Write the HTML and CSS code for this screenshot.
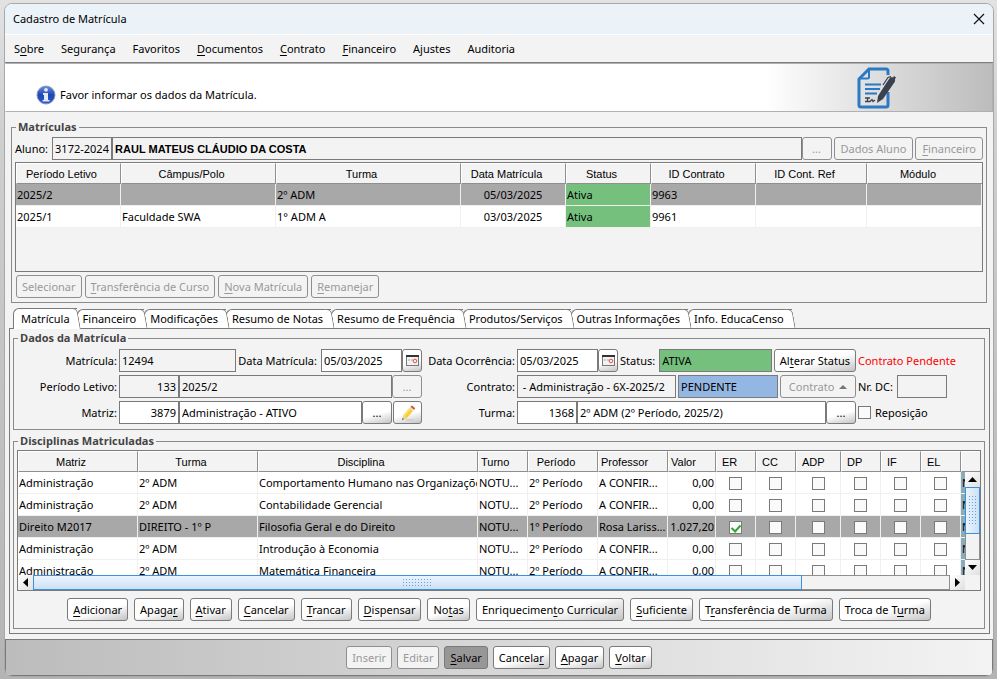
FILE: index.html
```
<!DOCTYPE html>
<html lang="pt-BR">

<head>
    <meta charset="UTF-8">
    <meta name="viewport" content="width=device-width, initial-scale=1.0">
    <title>Cadastro de Matrícula</title>
    <link rel="stylesheet" href="styles.css">
</head>

<body>
    <div class="window">
        <header class="titlebar">
            <h1>Cadastro de Matrícula</h1>
            <button class="close" aria-label="Fechar">
                <svg width="12" height="12" viewBox="0 0 12 12"><path d="M1 1l10 10M11 1L1 11" stroke="#111" stroke-width="1.2" fill="none"/></svg>
            </button>
        </header>

        <nav class="menubar">
            <a href="#">S<u>o</u>bre</a>
            <a href="#">Segurança</a>
            <a href="#">Favoritos</a>
            <a href="#"><u>D</u>ocumentos</a>
            <a href="#"><u>C</u>ontrato</a>
            <a href="#"><u>F</u>inanceiro</a>
            <a href="#">Ajustes</a>
            <a href="#">Auditoria</a>
        </nav>

        <div class="banner">
            <p class="message">
                <svg width="20" height="20" viewBox="0 0 20 20">
                    <defs>
                        <linearGradient id="info" x1="0" y1="0" x2="0" y2="1">
                            <stop offset="0" stop-color="#6a8fe0"/>
                            <stop offset="0.5" stop-color="#1c46b4"/>
                            <stop offset="1" stop-color="#2a5cd8"/>
                        </linearGradient>
                    </defs>
                    <circle cx="10" cy="10" r="9" fill="url(#info)" stroke="#8a97b8"/>
                    <circle cx="10" cy="4.800" r="1.900" fill="#e4e8f4"/>
                    <path d="M7 8h5v7h1.500v1.500h-7v-1.500H8v-5H7z" fill="#e4e8f4"/>
                </svg>
                Favor informar os dados da Matrícula.
            </p>
            <svg class="doc-icon" width="40" height="42" viewBox="0 0 40 42">
                <path d="M31 8V4a2 2 0 0 0-2-2H12L2 12v26a2 2 0 0 0 2 2h25a2 2 0 0 0 2-2V25" fill="none" stroke="#2b78c5" stroke-width="3"/>
                <path d="M12 2v8a1.500 1.500 0 0 1-1.500 1.500H2" fill="none" stroke="#2b78c5" stroke-width="2"/>
                <path d="M8 17.500h16M8 22h15M8 26.500h12" stroke="#2b78c5" stroke-width="2"/>
                <path d="M8 31h5M10.500 31v3.500M8 34.500h5l2-2 1 2 2-1.500" fill="none" stroke="#3a4250" stroke-width="1.3"/>
                <path d="M20 36l1-7 9-14 3.500-5 2.500.5 1-1.500 2 1.500-1 1.500v2.500L26 32z" fill="#3a4250"/>
                <path d="M26 18l5-7.500 3-1" fill="none" stroke="#3a4250" stroke-width="1.2"/>
            </svg>
        </div>

        <main class="content">
            <fieldset class="group">
                <legend>Matrículas</legend>
                <div class="row aluno">
                    <label for="aluno">Aluno:</label>
                    <input class="field code readonly" id="aluno" value="3172-2024" readonly>
                    <input class="field name readonly" aria-label="Nome do aluno" value="RAUL MATEUS CLÁUDIO DA COSTA" readonly>
                    <button class="btn dots" disabled>...</button>
                    <button class="btn spaced-btn" disabled>Dados Aluno</button>
                    <button class="btn spaced-btn" disabled><u>F</u>inanceiro</button>
                </div>

                <div class="table-box enrollments">
                    <table class="grid">
                        <colgroup>
                            <col class="w105"><col class="w155"><col class="w185"><col class="w105">
                            <col class="w85"><col class="w105"><col class="w111"><col>
                        </colgroup>
                        <thead>
                            <tr><th>Período Letivo</th><th>Câmpus/Polo</th><th>Turma</th><th>Data Matrícula</th><th>Status</th><th>ID Contrato</th><th>ID Cont. Ref</th><th>Módulo</th></tr>
                        </thead>
                        <tbody>
                            <tr class="selected"><td>2025/2</td><td></td><td>2º ADM</td><td class="center">05/03/2025</td><td class="active">Ativa</td><td>9963</td><td></td><td></td></tr>
                            <tr><td>2025/1</td><td>Faculdade SWA</td><td>1° ADM A</td><td class="center">03/03/2025</td><td class="active">Ativa</td><td>9961</td><td></td><td></td></tr>
                        </tbody>
                    </table>
                </div>

                <div class="actions">
                    <button class="btn" disabled>Selecionar</button>
                    <button class="btn" disabled><u>T</u>ransferência de Curso</button>
                    <button class="btn" disabled><u>N</u>ova Matrícula</button>
                    <button class="btn" disabled><u>R</u>emanejar</button>
                </div>
            </fieldset>

            <div class="tabs" role="tablist">
                <button class="tab current" role="tab" aria-selected="true">Matrícula</button>
                <button class="tab" role="tab">Financeiro</button>
                <button class="tab" role="tab">Modificações</button>
                <button class="tab" role="tab">Resumo de Notas</button>
                <button class="tab" role="tab">Resumo de Frequência</button>
                <button class="tab" role="tab">Produtos/Serviços</button>
                <button class="tab" role="tab">Outras Informações</button>
                <button class="tab" role="tab">Info. EducaCenso</button>
            </div>

            <div class="tab-panel" role="tabpanel">
                <fieldset class="group">
                    <legend>Dados da Matrícula</legend>
                    <div class="form">
                        <label for="matricula">Matrícula:</label>
                        <div class="row">
                            <input class="field grow readonly" id="matricula" value="12494" readonly>
                            <label class="inline" for="data-matricula">Data Matrícula:</label>
                            <input class="field date" id="data-matricula" value="05/03/2025">
                            <button class="btn icon" aria-label="Calendário">
                                <svg width="13" height="11" viewBox="0 0 13 11"><rect x=".5" y=".5" width="12" height="10" fill="#f2f2f2" stroke="#777"/><path d="M0 1h13" stroke="#333" stroke-width="2"/><path d="M2 4h2v2H2zM5 4h2v2H5z" fill="#ccc"/><circle cx="9" cy="6" r="1.800" fill="none" stroke="#e25050"/></svg>
                            </button>
                        </div>
                        <label for="data-ocorrencia">Data Ocorrência:</label>
                        <div class="row">
                            <input class="field date" id="data-ocorrencia" value="05/03/2025">
                            <button class="btn icon" aria-label="Calendário">
                                <svg width="13" height="11" viewBox="0 0 13 11"><rect x=".5" y=".5" width="12" height="10" fill="#f2f2f2" stroke="#777"/><path d="M0 1h13" stroke="#333" stroke-width="2"/><path d="M2 4h2v2H2zM5 4h2v2H5z" fill="#ccc"/><circle cx="9" cy="6" r="1.800" fill="none" stroke="#e25050"/></svg>
                            </button>
                            <label class="inline" for="status">Status:</label>
                            <input class="field grow active" id="status" value="ATIVA" readonly>
                            <button class="btn spaced-btn">Al<u>t</u>erar Status</button>
                        </div>
                        <span class="warning">Contrato Pendente</span>

                        <label for="periodo">Período Letivo:</label>
                        <div class="row">
                            <input class="field num readonly" id="periodo" value="133" readonly>
                            <input class="field grow readonly" aria-label="Descrição do período" value="2025/2" readonly>
                            <button class="btn dots" disabled>...</button>
                        </div>
                        <label for="contrato">Contrato:</label>
                        <div class="row spaced">
                            <input class="field grow readonly" id="contrato" value=" - Administração - 6X-2025/2" readonly>
                            <input class="field pending" aria-label="Situação do contrato" value="PENDENTE" readonly>
                            <button class="btn menu-btn" disabled>Contrato <svg width="8" height="4" viewBox="0 0 8 4"><path d="M0 4l4-4 4 4z" fill="#777"/></svg></button>
                        </div>
                        <div class="row wide">
                            <label for="nr-dc">Nr. DC:</label>
                            <input class="field dc readonly" id="nr-dc" readonly>
                        </div>

                        <label for="matriz">Matriz:</label>
                        <div class="row">
                            <input class="field num" id="matriz" value="3879">
                            <input class="field grow" aria-label="Descrição da matriz" value="Administração - ATIVO">
                            <button class="btn dots">...</button>
                            <button class="btn edit" aria-label="Editar matriz">
                                <svg width="16" height="16" viewBox="0 0 16 16"><path d="M6 15h8" stroke="#ccc" stroke-width="1.500"/><path d="M3 10.500L9.500 3 13 6 6.500 13.500z" fill="#f9cf33"/><path d="M3 10.500L9.500 3l1.200 1L4 12z" fill="#fbe27a"/><path d="M9.500 3l1-1.200 3.500 3L13 6z" fill="#ddd"/><path d="M10.500 1.800L12 .5l3.200 2.700L14 4.800z" fill="#d9502b"/><path d="M3 10.500L6.500 13.500 2 15z" fill="#e8d2a0"/><path d="M2 15l.6-2 1.500 1.200z" fill="#555"/></svg>
                            </button>
                        </div>
                        <label for="turma">Turma:</label>
                        <div class="row">
                            <input class="field num" id="turma" value="1368">
                            <input class="field grow" aria-label="Descrição da turma" value="2º ADM (2º Período, 2025/2)">
                            <button class="btn dots">...</button>
                        </div>
                        <label class="check"><input type="checkbox" class="box"> Reposição</label>
                    </div>
                </fieldset>

                <fieldset class="group subjects-group">
                    <legend>Disciplinas Matriculadas</legend>
                    <div class="table-box subjects">
                        <div class="viewport">
                            <table class="grid">
                                <colgroup>
                                    <col class="w120"><col class="w120"><col class="w220"><col class="w50"><col class="w70"><col class="w70"><col class="w48">
                                    <col class="w40"><col class="w40"><col class="w45"><col class="w40"><col class="w40"><col class="w40"><col>
                                </colgroup>
                                <thead>
                                    <tr><th>Matriz</th><th>Turma</th><th>Disciplina</th><th class="left">Turno</th><th>Período</th><th class="left">Professor</th><th class="left">Valor</th><th class="flag">ER</th><th class="flag">CC</th><th class="flag">ADP</th><th class="flag">DP</th><th class="flag">IF</th><th class="flag">EL</th><th></th></tr>
                                </thead>
                                <tbody id="subjects"></tbody>
                            </table>
                        </div>
                        <div class="vscroll">
                            <button class="arrow" aria-label="Rolar para cima"><svg width="9" height="5" viewBox="0 0 9 5"><path d="M0 5l4.500-5L9 5z"/></svg></button>
                            <div class="track"><div class="thumb"></div></div>
                            <button class="arrow" aria-label="Rolar para baixo"><svg width="9" height="5" viewBox="0 0 9 5"><path d="M0 0l4.500 5L9 0z"/></svg></button>
                        </div>
                        <div class="hscroll">
                            <button class="arrow" aria-label="Rolar para a esquerda"><svg width="5" height="9" viewBox="0 0 5 9"><path d="M5 0L0 4.500 5 9z"/></svg></button>
                            <div class="track"><div class="thumb"></div></div>
                            <button class="arrow" aria-label="Rolar para a direita"><svg width="5" height="9" viewBox="0 0 5 9"><path d="M0 0l5 4.500L0 9z"/></svg></button>
                        </div>
                    </div>
                    <div class="actions centered">
                        <button class="btn"><u>A</u>dicionar</button>
                        <button class="btn">Apaga<u>r</u></button>
                        <button class="btn"><u>A</u>tivar</button>
                        <button class="btn"><u>C</u>ancelar</button>
                        <button class="btn"><u>T</u>rancar</button>
                        <button class="btn"><u>D</u>ispensar</button>
                        <button class="btn">No<u>t</u>as</button>
                        <button class="btn">Enriquecimen<u>t</u>o Curricular</button>
                        <button class="btn"><u>S</u>uficiente</button>
                        <button class="btn">T<u>r</u>ansferência de Turma</button>
                        <button class="btn">Troca de T<u>u</u>rma</button>
                    </div>
                </fieldset>
            </div>
        </main>

        <footer class="footer">
            <button class="btn" disabled>Inserir</button>
            <button class="btn" disabled>Editar</button>
            <button class="btn pressed"><u>S</u>alvar</button>
            <button class="btn">Cancela<u>r</u></button>
            <button class="btn"><u>A</u>pagar</button>
            <button class="btn"><u>V</u>oltar</button>
        </footer>
    </div>

    <script>
        const subjects = [
            ["Administração", "2º ADM", "Comportamento Humano nas Organizações", "NOTURNO", "2º Período", "A CONFIRMAR", "0,00"],
            ["Administração", "2º ADM", "Contabilidade Gerencial", "NOTURNO", "2º Período", "A CONFIRMAR", "0,00"],
            ["Direito M2017", "DIREITO - 1º P", "Filosofia Geral e do Direito", "NOTURNO", "1º Período", "Rosa Larissa", "1.027,20"],
            ["Administração", "2º ADM", "Introdução à Economia", "NOTURNO", "2º Período", "A CONFIRMAR", "0,00"],
            ["Administração", "2º ADM", "Matemática Financeira", "NOTURNO", "2º Período", "A CONFIRMAR", "0,00"]
        ];
        const flags = ["ER", "CC", "ADP", "DP", "IF", "EL"];
        const selected = 2;
        const body = document.getElementById("subjects");

        // Short columns are cut with an ellipsis
        function shorten(text, size) {
            return text.length > size ? text.slice(0, size) + "..." : text;
        }

        subjects.forEach(function (item, index) {
            const row = document.createElement("tr");
            if (index === selected) {
                row.className = "selected";
            }
            item.forEach(function (text, col) {
                const cell = document.createElement("td");
                if (col === 3) text = shorten(text, 4);
                if (col === 5) text = shorten(text, text.startsWith("A") ? 8 : 11);
                if (col === 6) cell.className = "right";
                cell.textContent = text;
                row.appendChild(cell);
            });
            flags.forEach(function (flag) {
                const cell = document.createElement("td");
                const box = document.createElement("input");
                cell.className = "center";
                box.type = "checkbox";
                box.className = "box";
                box.setAttribute("aria-label", flag + " - " + item[2]);
                box.checked = index === selected && flag === "ER";
                cell.appendChild(box);
                row.appendChild(cell);
            });
            const last = document.createElement("td");
            last.className = "tag";
            last.textContent = "N";
            row.appendChild(last);
            body.appendChild(row);
        });
    </script>
</body>

</html>
```

FILE: styles.css
```
/* Basic Reset */
* {
    box-sizing: border-box;
    margin: 0;
    padding: 0;
}

body {
    min-height: 100vh;
    padding: 3px 3px 2px 4px;
    background: linear-gradient(#e2e2e2, #cfcfcf 20%, #b4b4b4);
    font: 11px/16px "Noto Sans", "Open Sans", sans-serif;
    color: #000;
    display: flex;
}

button,
input {
    font: inherit;
    color: inherit;
}

u {
    text-underline-offset: 2px;
}

/* Window */
.window {
    flex: 1;
    min-width: 0;
    display: flex;
    flex-direction: column;
    background: #f3f3f3;
    border: 1px solid #a8a8a8;
    border-radius: 8px;
    overflow: hidden;
}

.titlebar {
    display: flex;
    align-items: center;
    justify-content: space-between;
    height: 30px;
    padding: 0 8px;
    background: #ebf3f9;
}

.titlebar h1 {
    font-size: 11px;
    font-weight: 400;
}

.close {
    display: flex;
    border: none;
    background: none;
}

.menubar {
    display: flex;
    align-items: center;
    gap: 17px;
    height: 29px;
    padding: 0 9px;
    border-top: 1px solid #fff;
    border-bottom: 1px solid #808080;
}

.menubar a {
    color: #000;
    text-decoration: none;
}

/* Message banner */
.banner {
    display: flex;
    align-items: center;
    justify-content: space-between;
    height: 49px;
    padding: 1px 95px 0 30px;
    border: 1px solid #b0b0b0;
    border-left-color: #fff;
    background: linear-gradient(90deg, #fff 77%, #bcbcbc);
}

.message {
    display: flex;
    align-items: center;
    gap: 4px;
    padding-top: 14px;
}

/* Groups */
.content {
    flex: 1;
    padding: 7px 3px 4px 4px;
}

.group {
    min-width: 0;
    border: 1px solid #8a8a8a;
    padding: 1px 3px 3px;
}

.content > .group {
    margin: 0 3px 0 2px;
    padding: 2px 3px 4px;
}

.group legend {
    margin-left: 1px;
    padding: 0 2px;
    font-family: "Open Sans", sans-serif;
    font-weight: 700;
    color: #444;
}

.row {
    display: flex;
    align-items: center;
    min-width: 0;
}

.row label,
.form label {
    white-space: nowrap;
}

.spaced {
    gap: 2px;
}

.wide {
    gap: 4px;
}

.field {
    min-width: 0;
    height: 23px;
    padding: 0 2px;
    border: 1px solid #7a7a7a;
    background: #fff;
}

.readonly {
    background: #f3f3f3;
}

.grow {
    flex: 1;
}

.code {
    width: 60px;
    margin-left: 4px;
}

.name {
    flex: 1;
    font-family: "Liberation Sans", Arial, sans-serif;
    font-weight: 700;
}

.num {
    width: 60px;
    text-align: right;
}

.date {
    width: 81px;
}

.dc {
    width: 50px;
}

.pending {
    width: 100px;
    background: #94b6e2;
}

.active {
    background: #76c07e;
}

/* Buttons */
.btn {
    height: 23px;
    padding: 0 5px;
    border: 1px solid #7a7a7a;
    border-radius: 3px;
    background: linear-gradient(165deg, #fff 55%, #c4c4c4);
    text-align: center;
    white-space: nowrap;
}

.btn:disabled {
    border-color: #8f8f8f;
    background: #f3f3f3;
    color: #999;
}

.btn.pressed {
    background: #979797;
}

.aluno .btn {
    padding: 0 6px;
}

.btn.dots {
    width: 30px;
}

.btn.edit,
.btn.icon {
    display: flex;
    align-items: center;
    justify-content: center;
    padding: 0;
}

.btn.edit {
    width: 29px;
    margin-left: 1px;
}

.btn.icon {
    width: 20px;
}

.btn.spaced-btn {
    margin-left: 2px;
}

.menu-btn {
    width: 76px;
}

.menu-btn svg {
    margin-left: 2px;
    vertical-align: 2px;
}

.actions {
    display: flex;
    flex-wrap: wrap;
    gap: 3px;
    padding: 3px 0 0 1px;
}

.actions.centered {
    justify-content: center;
    gap: 6px;
    padding: 7px 0 4px;
}

/* Tables */
.table-box {
    border: 1px solid #7a7a7a;
    background: #f3f3f3;
}

.enrollments {
    height: 110px;
    margin-top: 2px;
}

.grid {
    width: 100%;
    table-layout: fixed;
    border-collapse: separate;
    border-spacing: 0;
}

.grid th {
    height: 21px;
    padding: 0 18px 0 4px;
    border: 1px solid #8f8f8f;
    border-left-color: #fff;
    border-top-color: #fff;
    background: #f3f3f3;
    font: 11px/16px "Liberation Sans", Arial, sans-serif;
    white-space: nowrap;
}

.grid th.left {
    padding: 0 2px;
    text-align: left;
}

.grid th.flag {
    padding: 0 5px;
    text-align: left;
}

.grid th:last-child {
    border-right: none;
}

.grid td {
    height: 22px;
    padding: 0 1px;
    border-right: 1px solid #f0f0f0;
    border-bottom: 1px solid #f0f0f0;
    background: #fff;
    white-space: nowrap;
    overflow: hidden;
}

.grid .selected td {
    background: #a8a8a8;
}

.grid td.active,
.grid .selected td.active {
    background: #76c07e;
}

.grid td.center {
    text-align: center;
}

.grid td.right {
    text-align: right;
}

.grid td.tag,
.grid .selected td.tag {
    background: #8aabb8;
}

.w40 { width: 40px; }
.w45 { width: 45px; }
.w48 { width: 48px; }
.w50 { width: 50px; }
.w70 { width: 70px; }
.w85 { width: 85px; }
.w105 { width: 105px; }
.w111 { width: 111px; }
.w120 { width: 120px; }
.w155 { width: 155px; }
.w185 { width: 185px; }
.w220 { width: 220px; }

/* Tabs */
.tabs {
    display: flex;
    align-items: flex-end;
    margin: 5px 0 0 4px;
}

.tab {
    position: relative;
    height: 19px;
    padding: 0 8px 0 5px;
    border: 1px solid #7a7a7a;
    border-radius: 6px 0 0 0;
    border-right: none;
    border-bottom: none;
    background: #fff;
}

/* Slanted right edge */
.tab::after {
    content: "";
    position: absolute;
    z-index: 1;
    top: -1px;
    right: -2px;
    bottom: 0;
    width: 5px;
    border: 1px solid #7a7a7a;
    border-left: none;
    border-bottom: none;
    border-radius: 0 5px 0 0;
    background: #fff;
    transform: skewX(10deg);
}

.tab.current {
    height: 21px;
    margin-bottom: -1px;
    padding: 0 7px;
}

.tab-panel {
    border: 1px solid #7a7a7a;
    padding: 1px 4px 4px 3px;
}

/* Enrollment form */
.form {
    display: grid;
    grid-template-columns: 100px 303fr 91px 339fr 123px;
    gap: 3px 2px;
    align-items: center;
    padding: 2px 0;
}

.form > label {
    text-align: right;
}

.inline {
    margin: 0 4px 0 2px;
}

.warning {
    color: #f00;
}

.form .check {
    display: flex;
    align-items: center;
    gap: 4px;
}

.box {
    appearance: none;
    width: 13px;
    height: 13px;
    border: 1px solid #7a7a7a;
    background: #fafafa;
    vertical-align: middle;
}

.box:checked::after {
    content: "";
    display: block;
    width: 4px;
    height: 7px;
    margin: 1px 0 0 3px;
    border: solid #2fa52f;
    border-width: 0 2px 2px 0;
    transform: rotate(42deg);
}

/* Subjects table with its scrollbars */
.subjects-group {
    margin-top: 3px;
}

.subjects {
    display: grid;
    grid-template: 21px 103px 15px / 1fr 15px;
}

.viewport {
    grid-area: 1 / 1 / 3 / 3;
    overflow: hidden;
}

.vscroll {
    grid-area: 2 / 2;
    display: flex;
    flex-direction: column;
    background: #f3f3f3;
}

.hscroll {
    grid-area: 3 / 1;
    display: flex;
    background: #f3f3f3;
}

.track {
    flex: 1;
    display: flex;
    border: 1px solid #8f8f8f;
}

.thumb {
    display: flex;
    align-items: center;
    justify-content: center;
    margin: -1px;
    border: 1px solid #3d8fe0;
    background: linear-gradient(#eaf4ff, #cfe0f3);
}

/* Dotted grip */
.thumb::after {
    content: "";
    width: 30px;
    height: 9px;
    background: radial-gradient(circle, #5fa4ea 1px, transparent 1px) 0 0 / 3px 3px;
}

.vscroll .thumb {
    flex: 1;
    height: 66%;
    background: linear-gradient(90deg, #eaf4ff, #cfe0f3);
}

.vscroll .thumb::after {
    width: 9px;
    height: 30px;
}

.hscroll .thumb {
    width: 84%;
}

.arrow {
    display: flex;
    align-items: center;
    justify-content: center;
    width: 15px;
    height: 15px;
    border: none;
    background: linear-gradient(135deg, #fff, #e0e0e0);
}

/* Footer */
.footer {
    display: flex;
    align-items: center;
    justify-content: center;
    gap: 5px;
    height: 37px;
    border: 1px solid #7a7a7a;
    background: linear-gradient(90deg, #bcbcbc, #f3f3f3);
}
```
